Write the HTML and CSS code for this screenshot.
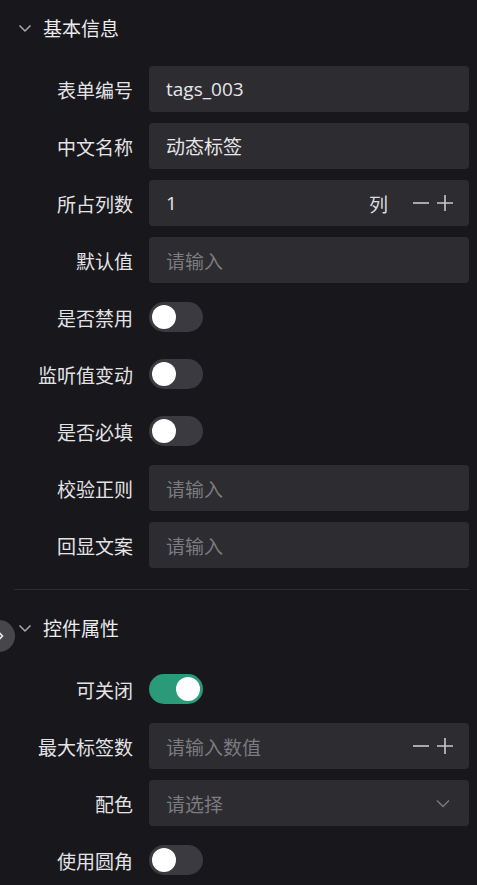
FILE: index.html
```html
<!DOCTYPE html>
<html lang="zh">
<head>
<meta charset="utf-8">
<link rel="stylesheet" href="styles.css">
</head>
<body>
<div class="panel">
  <section class="section">
    <div class="sec-head">
      <svg class="chev" width="14" height="14" viewBox="0 0 14 14"><path d="M1.5 4.5 L7 10 L12.5 4.5" fill="none" stroke="#a9a9ad" stroke-width="1.5"/></svg>
      <span>基本信息</span>
    </div>
    <div class="form">
      <label class="lbl">表单编号</label>
      <div class="input"><span class="val">tags_003</span></div>
      <label class="lbl">中文名称</label>
      <div class="input"><span class="val">动态标签</span></div>
      <label class="lbl">所占列数</label>
      <div class="input"><span class="val grow">1</span><span class="unit">列</span>
        <svg class="ctl" width="18" height="18" viewBox="0 0 18 18"><path d="M1 9 H17" stroke="#c8c8cc" stroke-width="1.6"/></svg>
        <svg class="ctl" width="18" height="18" viewBox="0 0 18 18"><path d="M1 9 H17 M9 1 V17" stroke="#c8c8cc" stroke-width="1.6"/></svg>
      </div>
      <label class="lbl">默认值</label>
      <div class="input"><span class="ph">请输入</span></div>
      <label class="lbl">是否禁用</label>
      <div class="sw-cell"><div class="switch"><div class="knob"></div></div></div>
      <label class="lbl">监听值变动</label>
      <div class="sw-cell"><div class="switch"><div class="knob"></div></div></div>
      <label class="lbl">是否必填</label>
      <div class="sw-cell"><div class="switch"><div class="knob"></div></div></div>
      <label class="lbl">校验正则</label>
      <div class="input"><span class="ph">请输入</span></div>
      <label class="lbl">回显文案</label>
      <div class="input"><span class="ph">请输入</span></div>
    </div>
  </section>
  <div class="divider"></div>
  <section class="section">
    <div class="sec-head">
      <svg class="chev" width="14" height="14" viewBox="0 0 14 14"><path d="M1.5 4.5 L7 10 L12.5 4.5" fill="none" stroke="#a9a9ad" stroke-width="1.5"/></svg>
      <span>控件属性</span>
    </div>
    <div class="form">
      <label class="lbl">可关闭</label>
      <div class="sw-cell"><div class="switch on"><div class="knob"></div></div></div>
      <label class="lbl">最大标签数</label>
      <div class="input"><span class="ph grow">请输入数值</span>
        <svg class="ctl" width="18" height="18" viewBox="0 0 18 18"><path d="M1 9 H17" stroke="#c8c8cc" stroke-width="1.6"/></svg>
        <svg class="ctl" width="18" height="18" viewBox="0 0 18 18"><path d="M1 9 H17 M9 1 V17" stroke="#c8c8cc" stroke-width="1.6"/></svg>
      </div>
      <label class="lbl">配色</label>
      <div class="input"><span class="ph grow">请选择</span>
        <svg class="sel" width="16" height="16" viewBox="0 0 16 16"><path d="M2 5.5 L8 11.5 L14 5.5" fill="none" stroke="#7c7c80" stroke-width="1.3"/></svg>
      </div>
      <label class="lbl">使用圆角</label>
      <div class="sw-cell"><div class="switch"><div class="knob"></div></div></div>
    </div>
  </section>
  <div class="collapse-btn">
    <svg width="8" height="10" viewBox="0 0 8 10"><path d="M2 1.5 L5.5 5 L2 8.5" fill="none" stroke="#e6e6e6" stroke-width="1.6"/></svg>
  </div>
</div>
</body>
</html>
```

FILE: styles.css
```css
* { box-sizing: border-box; }
html, body {
  margin: 0;
  padding: 0;
  background: #18171c;
}
body {
  font-family: "Noto Sans CJK SC", "Noto Sans", sans-serif;
  color: #e3e3e6;
}
.panel {
  position: relative;
  padding: 0 8px 0 14px;
  width: 477px;
  height: 885px;
  overflow: hidden;
}
.sec-head {
  height: 55px;
  display: flex;
  align-items: center;
  gap: 11px;
  padding-left: 4px;
  font-size: 19px;
  color: #ececef;
}
.chev { display: block; }
.form {
  margin-top: 11px;
  display: grid;
  grid-template-columns: 119px 1fr;
  column-gap: 16px;
  row-gap: 11px;
}
.lbl {
  height: 46px;
  display: flex;
  align-items: center;
  justify-content: flex-end;
  font-size: 19px;
  color: #e3e3e6;
  white-space: nowrap;
}
.input {
  height: 46px;
  background: #2d2c31;
  border-radius: 4px;
  display: flex;
  align-items: center;
  padding: 0 15px 0 17px;
  font-size: 19px;
}
.val { color: #e6e6e9; font-family: "Open Sans", "Noto Sans CJK SC", sans-serif; }
.val:lang(zh) { }
.ph { color: #7b7b80; }
.grow { flex: 1; }
.unit { color: #dcdcdf; margin-right: 18px; }
.ctl { display: block; margin-left: 6px; }
.sel { display: block; margin-right: 3px; }
.sw-cell {
  height: 46px;
  display: flex;
  align-items: center;
}
.switch {
  width: 54px;
  height: 30px;
  border-radius: 15px;
  background: #3b3a40;
  padding: 3px;
  display: flex;
  justify-content: flex-start;
}
.switch.on {
  background: #2a9a78;
  justify-content: flex-end;
}
.knob {
  width: 24px;
  height: 24px;
  border-radius: 50%;
  background: #ffffff;
}
.divider {
  height: 1px;
  background: #2e2d32;
  margin: 21px 0 10px;
}
.collapse-btn {
  position: absolute;
  left: -17px;
  top: 620px;
  width: 32px;
  height: 32px;
  border-radius: 50%;
  background: #47464b;
  display: flex;
  align-items: center;
  justify-content: flex-end;
  padding-right: 10px;
}
.collapse-btn svg { display: block; }
```
